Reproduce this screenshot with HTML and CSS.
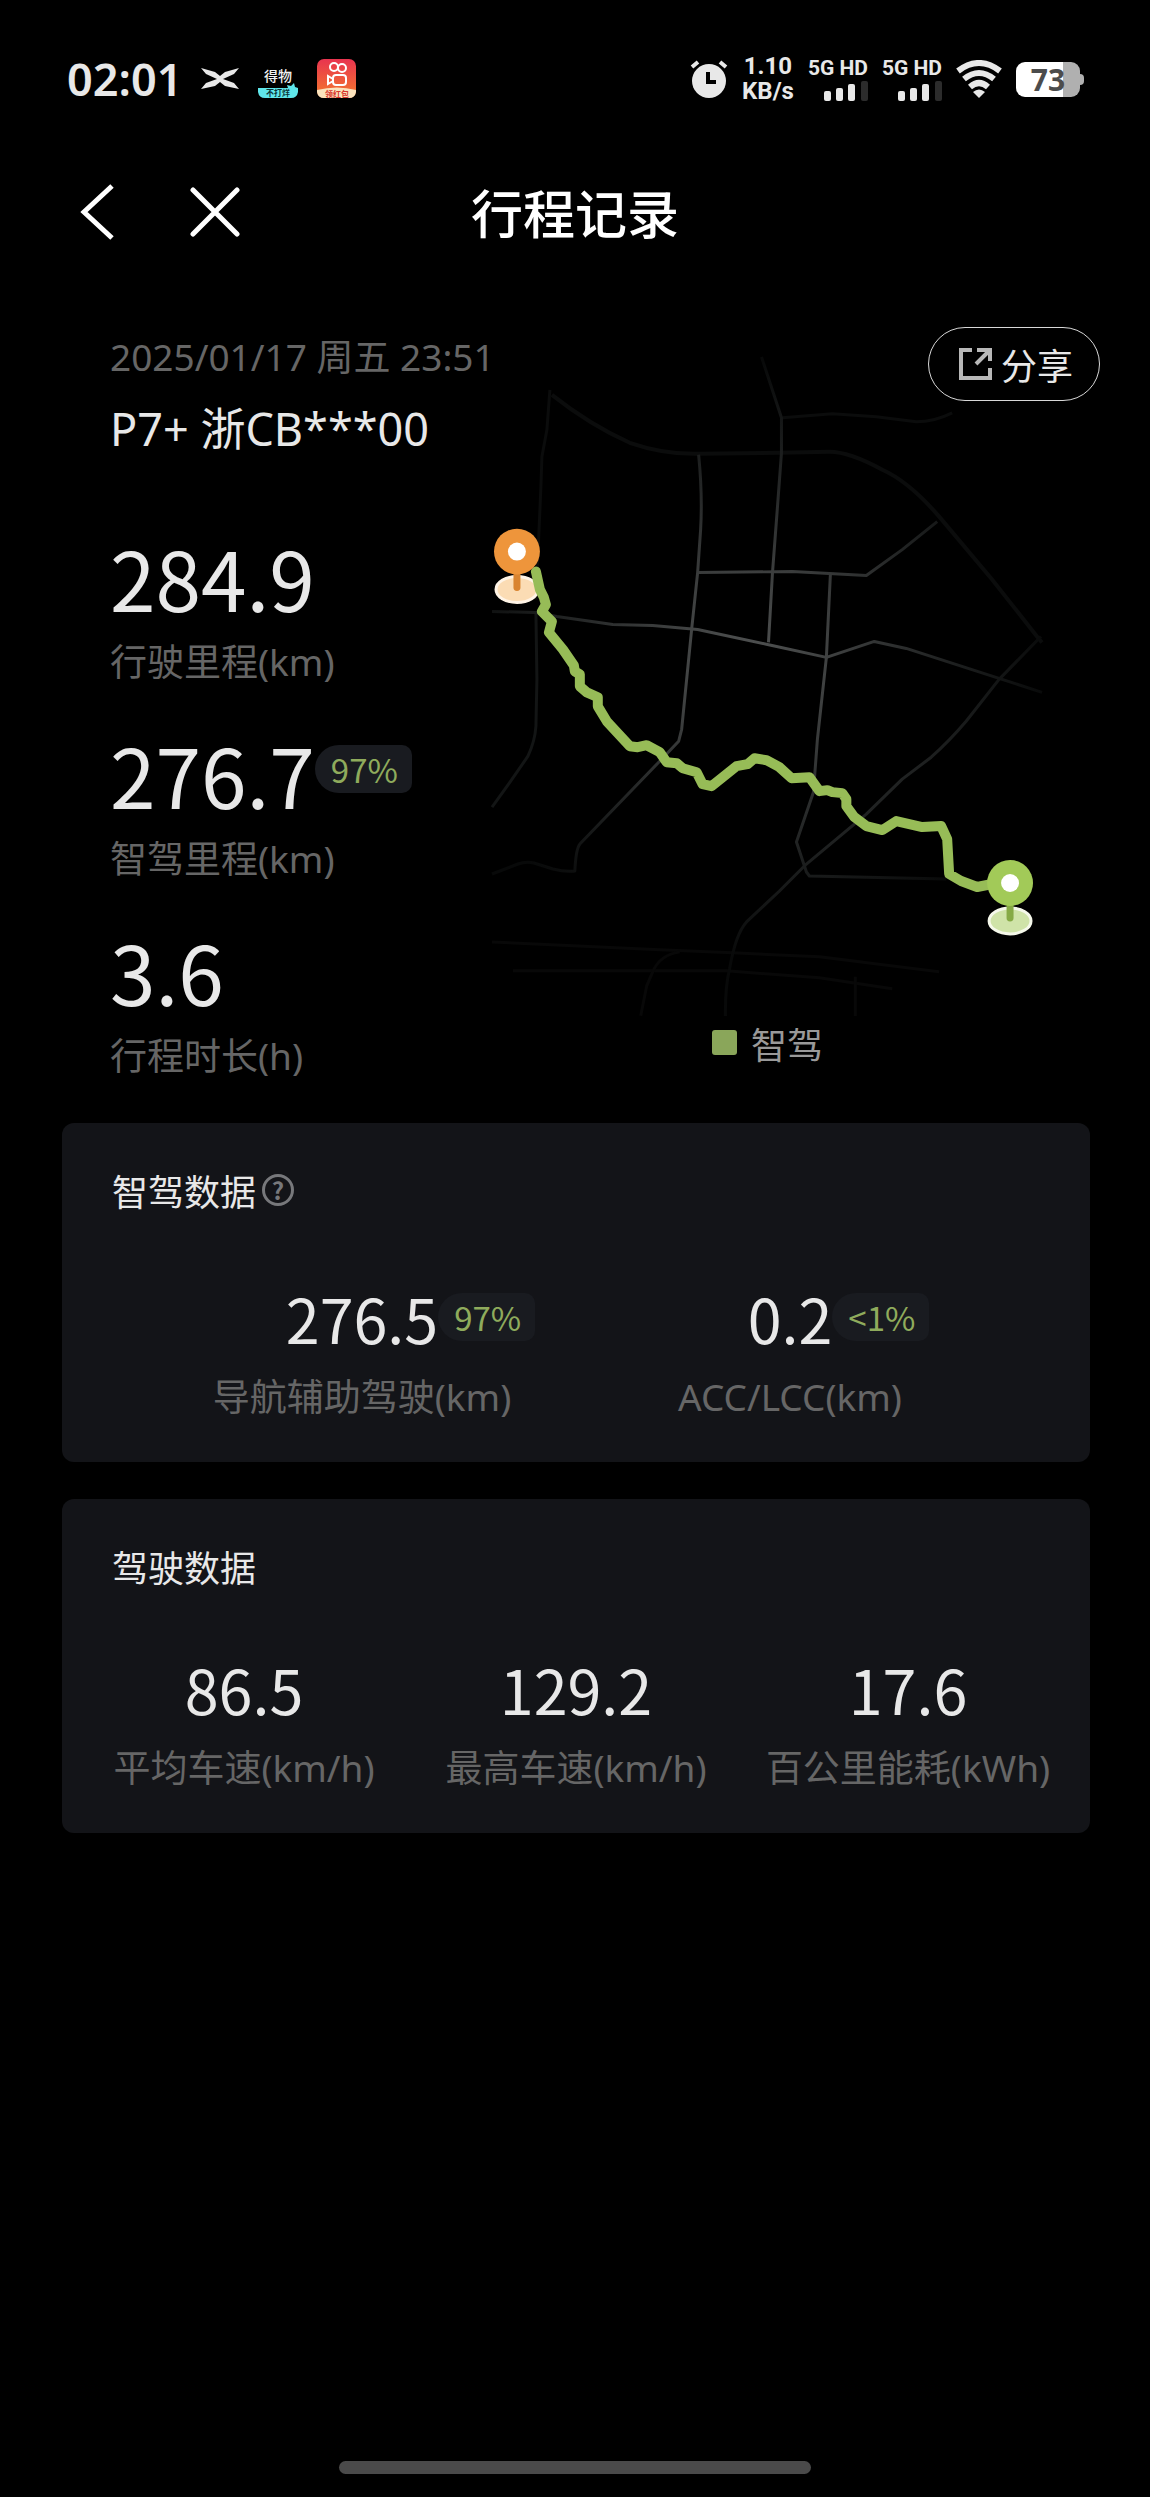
FILE: index.html
```html
<!DOCTYPE html>
<html lang="zh-CN">
<head>
    <meta charset="UTF-8">
    <meta name="viewport" content="width=device-width, initial-scale=1.0">
    <title>行程记录</title>
    <link rel="stylesheet" href="styles.css">
</head>
<body>
    <!-- 状态栏 -->
    <div class="status-bar">
        <div class="status-left">
            <span class="clock">02:01</span>
            <svg class="icon-brand" viewBox="0 0 38 22" width="38" height="22">
                <path fill="#e8e8e8" d="M0 0 L14 4 L19 8 L24 4 L38 0 L33 6 L22 11 L33 15 L38 21 L24 18 L19 14 L14 18 L0 21 L5 15 L16 11 L5 6 Z"/>
            </svg>
            <svg class="icon-app" viewBox="0 0 40 40" width="40" height="40">
                <text x="20" y="22" text-anchor="middle" font-size="14" font-weight="500" fill="#f2f2f2">得物</text>
                <path fill="#5fe6ea" d="M0 29 H30 L29 26 L33 27 L36 24 L37 28 L40 29 V33 Q39 39 33 39 H7 Q1 39 0 33 Z"/>
                <text x="20" y="37" text-anchor="middle" font-size="8" font-weight="700" fill="#0b3438">不打烊</text>
            </svg>
            <svg class="icon-app" viewBox="0 0 40 40" width="40" height="40">
                <defs>
                    <linearGradient id="ks" x1="0" y1="0" x2="0" y2="1">
                        <stop offset="0" stop-color="#e8344f"/>
                        <stop offset="1" stop-color="#f47a2c"/>
                    </linearGradient>
                </defs>
                <rect x="0" y="0" width="39" height="39" rx="7" fill="url(#ks)"/>
                <g fill="none" stroke="#fff" stroke-width="2">
                    <circle cx="17" cy="8" r="4"/>
                    <circle cx="25" cy="9" r="4"/>
                    <rect x="16" y="16" width="13" height="10" rx="3"/>
                    <path d="M16 20 L11 17 V25 L16 22"/>
                </g>
                <path fill="#fbe3bd" d="M0 31 Q20 26 39 31 V33 Q38 39 32 39 H7 Q1 39 0 33 Z"/>
                <text x="20" y="38" text-anchor="middle" font-size="8" font-weight="700" fill="#d8342c">领红包</text>
            </svg>
        </div>
        <div class="status-right">
            <svg viewBox="0 0 38 38" width="38" height="38">
                <circle cx="19" cy="21" r="17" fill="#e8e8e8"/>
                <path d="M2 7 L8 2 M30 2 L36 7" stroke="#e8e8e8" stroke-width="4"/>
                <path d="M18 12 V22 H26" fill="none" stroke="#000" stroke-width="4"/>
            </svg>
            <span class="net-speed"><span>1.10</span><span>KB/s</span></span>
            <span class="signal">5G HD
                <svg viewBox="0 0 44 20" width="44" height="20">
                    <rect x="0" y="10" width="7" height="10" rx="2" fill="#e8e8e8"/>
                    <rect x="12" y="7" width="7" height="13" rx="2" fill="#e8e8e8"/>
                    <rect x="24" y="3" width="7" height="17" rx="2" fill="#e8e8e8"/>
                    <rect x="37" y="0" width="7" height="20" rx="2" fill="#2c2c2c"/>
                </svg>
            </span>
            <span class="signal">5G HD
                <svg viewBox="0 0 44 20" width="44" height="20">
                    <rect x="0" y="10" width="7" height="10" rx="2" fill="#e8e8e8"/>
                    <rect x="12" y="7" width="7" height="13" rx="2" fill="#e8e8e8"/>
                    <rect x="24" y="3" width="7" height="17" rx="2" fill="#e8e8e8"/>
                    <rect x="37" y="0" width="7" height="20" rx="2" fill="#2c2c2c"/>
                </svg>
            </span>
            <svg class="icon-wifi" viewBox="0 0 46 38" width="46" height="38">
                <g fill="none" stroke="#e8e8e8" stroke-width="6">
                    <path d="M2 11 Q23 -5 44 11"/>
                    <path d="M8 19 Q23 7 38 19"/>
                    <path d="M14 27 Q23 19 32 27"/>
                </g>
                <path d="M17 32 Q23 27 29 32 L23 38 Z" fill="#e8e8e8"/>
            </svg>
            <span class="battery">73</span>
        </div>
    </div>

    <!-- 导航栏 -->
    <header class="nav-bar">
        <div class="nav-buttons">
            <button class="nav-button" type="button" aria-label="返回">
                <svg viewBox="0 0 34 56" width="34" height="56">
                    <path d="M32 2 L4 28 L32 54" fill="none" stroke="#fff" stroke-width="5"/>
                </svg>
            </button>
            <button class="nav-button" type="button" aria-label="关闭">
                <svg viewBox="0 0 50 50" width="50" height="50">
                    <path d="M3 3 L47 47 M47 3 L3 47" stroke="#fff" stroke-width="5" stroke-linecap="round"/>
                </svg>
            </button>
        </div>
        <h1>行程记录</h1>
    </header>

    <main>
        <!-- 行程概览 -->
        <section class="trip">
            <div class="trip-info">
                <p class="trip-date">2025/01/17 周五 23:51</p>
                <p class="trip-car">P7+ 浙CB***00</p>
                <div class="stat-list">
                    <div class="stat">
                        <div class="stat-value">284.9</div>
                        <div class="label">行驶里程(km)</div>
                    </div>
                    <div class="stat">
                        <div class="stat-value">276.7<span class="badge">97%</span></div>
                        <div class="label">智驾里程(km)</div>
                    </div>
                    <div class="stat">
                        <div class="stat-value">3.6</div>
                        <div class="label">行程时长(h)</div>
                    </div>
                </div>
            </div>
            <div class="trip-map">
                <svg class="map" viewBox="491 327 554 690" role="img" aria-label="行程路线">
                    <defs>
                        <radialGradient id="road" gradientUnits="userSpaceOnUse" cx="750" cy="660" r="300">
                            <stop offset="0" stop-color="#505252"/>
                            <stop offset="0.3" stop-color="#3c3e3e"/>
                            <stop offset="0.7" stop-color="#1c1e1e"/>
                            <stop offset="1" stop-color="#080909"/>
                        </radialGradient>
                    </defs>
                    <!-- 外围道路 -->
                    <g fill="none" stroke="#0b0c0c" stroke-width="3">
                        <path d="M550 390 L547 430 L542 457 L541 487 L539 533 L536 600"/>
                        <path stroke-width="4" d="M552 395 Q590 425 630 443 Q665 455 700 454 L780 453 L830 452 Q850 452 883 470 Q910 482 940 517 L993 580 L1038 637 L1043 643"/>
                        <path d="M783 418 L833 414 L877 417 L917 422 Q935 422 953 413"/>
                        <path stroke="#080808" d="M492 943 L660 951 L733 954 L820 958 L940 973"/>
                        <path stroke="#080808" d="M513 972 H727 L820 979 L893 990"/>
                        <path stroke="#080808" d="M680 953 Q660 956 653 973 L647 987 L641 1017 M856 978 V1018"/>
                    </g>
                    <!-- 主要道路 -->
                    <g fill="none" stroke="url(#road)" stroke-width="3" stroke-linejoin="round">
                        <path stroke="#131515" d="M536 613 L537 680 L536 727 Q535 742 528 757 L510 783 L492 808"/>
                        <path d="M762 357 L782 418 V453 L778 507 L773 573 L769 643"/>
                        <path d="M699 455 Q703 495 701 530 L698 573 L692 630 L682 730 L679 742 L660 762 L580 845 Q576 850 575 872 Q565 873 553 870 L534 864 Q526 862 518 865 L492 875"/>
                        <path d="M698 573 L793 572 L867 576 L903 550 L938 522"/>
                        <path d="M492 612 L535 613 L557 617 L613 625 L653 626 L698 630 L768 645 L827 658 L875 642 L907 649 L1000 679 L1043 693"/>
                        <path d="M831 575 L827 658 L818 740 L814 793 L797 843 L807 873 L810 877 L947 880"/>
                        <path d="M1042 637 L1000 680 L967 722 Q950 742 932 758 L903 780 L867 815 L807 865 L780 892 L747 923 Q736 935 730 970 Q725 990 726 1023"/>
                    </g>
                    <!-- 起点/终点底座 -->
                    <ellipse cx="517" cy="590" rx="21" ry="13" fill="#fbdcb4" stroke="#fff4e6" stroke-width="3"/>
                    <ellipse cx="1011" cy="922" rx="21" ry="13" fill="#cfe3a8" stroke="#f5f8ea" stroke-width="3"/>
                    <!-- 智驾路线 -->
                    <path fill="none" stroke="#97bc57" stroke-width="10" stroke-linejoin="round" stroke-linecap="round" d="M536 572 L540 590 L544 598 L546 605 L542 612 L552 622 L549 633 L563 650 L574 666 L575 672 L580 675 L580 687 L587 693 L598 698 L598 707 L607 722 L630 747 L638 748 L647 746 L660 753 L667 763 L677 764 L683 769 L697 773 L703 785 L712 787 L737 767 L748 765 L755 759 L767 761 L780 768 L792 779 L810 778 L820 792 L828 791 L833 793 L843 794 L847 800 L847 807 L855 818 L867 827 L883 831 L897 822 L923 828 L942 827 L948 840 L950 875 L962 882 L978 888 L993 885"/>
                    <path d="M517 570 V588" stroke="#d98430" stroke-width="7" stroke-linecap="round"/>
                    <circle cx="517" cy="552" r="23" fill="#ee953b"/>
                    <circle cx="517" cy="552" r="9" fill="#fff"/>
                    <path d="M1011 902 V919" stroke="#86aa45" stroke-width="7" stroke-linecap="round"/>
                    <circle cx="1011" cy="884" r="23" fill="#a2ca58"/>
                    <circle cx="1011" cy="884" r="9" fill="#fff"/>
                </svg>
                <div class="legend"><span class="legend-color"></span>智驾</div>
            </div>
            <button class="share-button" type="button">
                <svg viewBox="0 0 34 34" width="34" height="34">
                    <path d="M13 3 H2 V31 H31 V21" fill="none" stroke="#b8b8b8" stroke-width="4"/>
                    <path d="M18 3 H31 V14 M30 4 L17 17" fill="none" stroke="#b8b8b8" stroke-width="4"/>
                </svg>
                分享
            </button>
        </section>

        <!-- 智驾数据 -->
        <section class="card">
            <h2>智驾数据
                <button class="help-button" type="button" aria-label="说明">?</button>
            </h2>
            <div class="data-row two">
                <div class="data-item">
                    <div class="data-value">276.5<span class="badge">97%</span></div>
                    <div class="label">导航辅助驾驶(km)</div>
                </div>
                <div class="data-item">
                    <div class="data-value">0.2<span class="badge">&lt;1%</span></div>
                    <div class="label">ACC/LCC(km)</div>
                </div>
            </div>
        </section>

        <!-- 驾驶数据 -->
        <section class="card">
            <h2>驾驶数据</h2>
            <div class="data-row three">
                <div class="data-item">
                    <div class="data-value">86.5</div>
                    <div class="label">平均车速(km/h)</div>
                </div>
                <div class="data-item">
                    <div class="data-value">129.2</div>
                    <div class="label">最高车速(km/h)</div>
                </div>
                <div class="data-item">
                    <div class="data-value">17.6</div>
                    <div class="label">百公里能耗(kWh)</div>
                </div>
            </div>
        </section>
    </main>

    <div class="home-indicator"></div>
</body>
</html>
```
FILE: styles.css
```css
* {
    box-sizing: border-box;
}
body {
    background-color: #000;
    color: #e8e8e8;
    font-family: 'Noto Sans CJK SC', sans-serif;
    display: flex;
    flex-direction: column;
    min-height: 100vh;
    margin: 0;
}
h1, h2, p {
    margin: 0;
    font-weight: normal;
}
button {
    background: none;
    border: none;
    padding: 0;
    color: inherit;
    font-family: inherit;
    cursor: pointer;
}
svg {
    display: block;
}

/* 状态栏 */
.status-bar {
    display: flex;
    justify-content: space-between;
    align-items: center;
    height: 158px;
    padding: 0 70px 0 67px;
}
.status-left,
.status-right {
    display: flex;
    align-items: center;
}
.status-left {
    gap: 19px;
}
.status-right {
    gap: 14px;
}
.clock {
    font-family: 'Noto Sans', sans-serif;
    font-size: 45px;
    font-weight: 600;
    line-height: 60px;
}
.net-speed {
    display: flex;
    flex-direction: column;
    align-items: center;
    font-family: Roboto, sans-serif;
    font-size: 24px;
    font-weight: 700;
    line-height: 25px;
}
.signal {
    display: flex;
    flex-direction: column;
    align-items: flex-end;
    gap: 3px;
    font-family: Roboto, sans-serif;
    font-size: 21px;
    font-weight: 700;
    line-height: 20px;
}
.battery {
    position: relative;
    width: 64px;
    height: 35px;
    border-radius: 9px;
    background: linear-gradient(to right, #fff 73%, #b0b0b0 73%);
    color: #4c4c4c;
    font-family: 'Noto Sans', sans-serif;
    font-size: 30px;
    font-weight: 700;
    line-height: 35px;
    text-align: center;
}
.battery::after {
    content: "";
    position: absolute;
    left: 100%;
    top: 12px;
    width: 4px;
    height: 11px;
    border-radius: 0 4px 4px 0;
    background-color: #b0b0b0;
}

/* 导航栏 */
.nav-bar {
    display: grid;
    grid-template-columns: 1fr auto 1fr;
    align-items: center;
    height: 108px;
    padding: 0 80px;
}
.nav-buttons {
    display: flex;
    align-items: center;
    gap: 76px;
}
.nav-bar h1 {
    color: #fff;
    font-size: 52px;
    font-weight: 500;
    line-height: 60px;
}

/* 行程概览 */
.trip {
    position: relative;
    display: flex;
    padding: 61px 106px 40px 110px;
}
.trip-info {
    width: 381px;
    flex-shrink: 0;
    white-space: nowrap;
}
.trip-date,
.trip-car,
.label {
    font-family: 'Noto Sans', 'Noto Sans CJK SC', sans-serif;
}
.trip-date {
    color: #666;
    font-size: 37px;
    line-height: 60px;
}
.trip-car {
    margin-top: 12px;
    font-size: 45px;
    line-height: 60px;
}
.stat-list {
    display: flex;
    flex-direction: column;
    gap: 43px;
    margin-top: 76px;
}
.stat-value {
    display: flex;
    align-items: center;
    margin-bottom: 16px;
    font-size: 82px;
    line-height: 84px;
}
.stat-value .badge {
    margin-bottom: 10px;
}
.label {
    color: #666;
    font-size: 37px;
    line-height: 54px;
    white-space: nowrap;
}
.badge {
    padding: 0 14px 0 16px;
    border-radius: 24px 10px 10px 24px;
    background-color: #191b20;
    color: #8fab5c;
    font-size: 33px;
    line-height: 48px;
}
.trip-map {
    flex: 1;
}
.map {
    width: 100%;
}
.legend {
    display: flex;
    justify-content: center;
    align-items: center;
    gap: 14px;
    color: #999;
    font-size: 36px;
    line-height: 54px;
}
.legend-color {
    width: 25px;
    height: 25px;
    border-radius: 3px;
    background-color: #8aa65a;
}
.share-button {
    position: absolute;
    top: 61px;
    right: 50px;
    display: flex;
    align-items: center;
    justify-content: center;
    gap: 8px;
    width: 172px;
    height: 74px;
    padding-left: 4px;
    border: 1px solid #d8d8d8;
    border-radius: 37px;
    font-size: 36px;
    line-height: 54px;
}

/* 数据卡片 */
.card {
    margin: 0 60px 37px 62px;
    padding: 40px 0 38px;
    border-radius: 12px;
    background-color: #131418;
}
.card h2 {
    display: flex;
    align-items: center;
    gap: 6px;
    padding-left: 50px;
    font-size: 36px;
    line-height: 54px;
}
.help-button {
    width: 32px;
    height: 32px;
    border: 3px solid #77787b;
    border-radius: 50%;
    color: #77787b;
    font-size: 24px;
    font-weight: 700;
    line-height: 24px;
}
.data-row {
    display: grid;
}
.data-row.two {
    grid-template-columns: 1fr 1fr;
    margin-top: 70px;
    padding: 0 86px;
}
.data-row.three {
    grid-template-columns: 1fr 1fr 1fr;
    margin-top: 65px;
    padding: 0 16px;
}
.data-item {
    display: flex;
    flex-direction: column;
    align-items: center;
    gap: 21px;
}
.data-value {
    position: relative;
    font-size: 61px;
    line-height: 62px;
}
.data-value .badge {
    position: absolute;
    left: 100%;
    top: 6px;
}

.home-indicator {
    width: 41%;
    height: 13px;
    margin: auto auto 23px;
    border-radius: 7px;
    background-color: #4a4a4a;
}
```
